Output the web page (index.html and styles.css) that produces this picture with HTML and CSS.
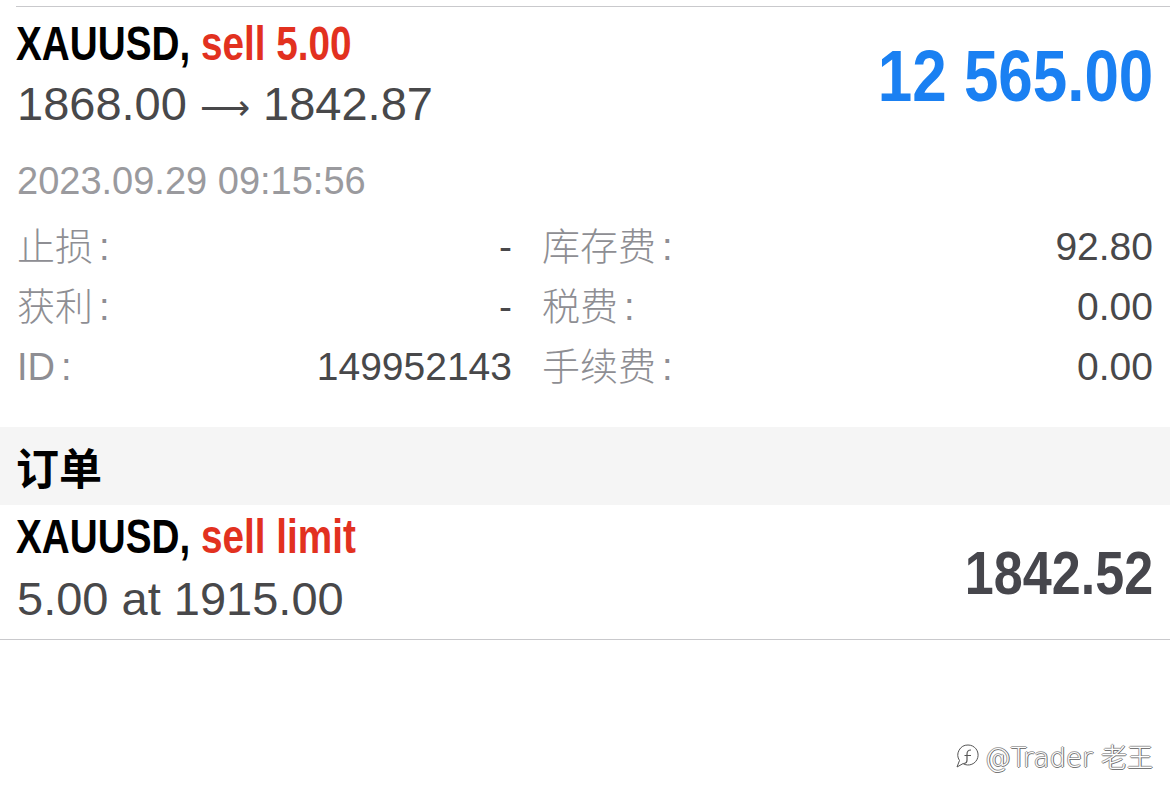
FILE: index.html
```html
<!DOCTYPE html>
<html lang="zh">
<head>
<meta charset="utf-8">
<title>XAUUSD</title>
<link rel="stylesheet" href="styles.css">
</head>
<body>
<div class="page">
  <section class="position">
    <div class="pos-head">
      <div class="pos-main">
        <div class="title"><span class="cond"><span class="sym">XAUUSD,</span> <span class="side">sell 5.00</span></span></div>
        <div class="prices">1868.00 <span class="arrow">⟶</span> 1842.87</div>
      </div>
      <div class="profit"><span class="cond-r">12 565.00</span></div>
    </div>
    <div class="time">2023.09.29 09:15:56</div>
    <div class="details">
      <div class="cell"><span class="label">止损<span class="colon">:</span></span><span class="value">-</span></div>
      <div class="cell"><span class="label">库存费<span class="colon">:</span></span><span class="value">92.80</span></div>
      <div class="cell"><span class="label">获利<span class="colon">:</span></span><span class="value">-</span></div>
      <div class="cell"><span class="label">税费<span class="colon">:</span></span><span class="value">0.00</span></div>
      <div class="cell"><span class="label">ID<span class="colon">:</span></span><span class="value">149952143</span></div>
      <div class="cell"><span class="label">手续费<span class="colon">:</span></span><span class="value">0.00</span></div>
    </div>
  </section>
  <div class="section-head">订单</div>
  <section class="order">
    <div class="order-main">
      <div class="title"><span class="cond"><span class="sym">XAUUSD,</span> <span class="side">sell limit</span></span></div>
      <div class="prices">5.00 at 1915.00</div>
    </div>
    <div class="order-price"><span class="cond-r">1842.52</span></div>
  </section>
  <div class="watermark">
    <svg class="wm-logo" width="26" height="30" viewBox="0 0 26 30">
      <path d="M14 4 A10 10 0 1 1 9 22.6 L3 26 L5.5 19.5 A10 10 0 0 1 14 4 Z" fill="none" stroke="#fff" stroke-width="3"/>
      <path d="M14 4 A10 10 0 1 1 9 22.6 L3 26 L5.5 19.5 A10 10 0 0 1 14 4 Z" fill="none" stroke="#555" stroke-width="1"/>
      <path d="M17 9 C13 9 13 11.5 13 13.5 L13 19 C13 21.5 11.5 22.5 9.5 22.5 M10.5 14.5 L17 14.5" fill="none" stroke="#555" stroke-width="1.2"/>
    </svg>
    <span class="wm-text">@Trader 老王</span>
  </div>
</div>
</body>
</html>
```
FILE: styles.css
```css
html, body {
  margin: 0;
  padding: 0;
  background: #ffffff;
}

.page {
  position: relative;
  width: 1170px;
  height: 799px;
  overflow: hidden;
  font-family: "Liberation Sans", "Noto Sans CJK SC", sans-serif;
}

.position {
  margin-top: 6px;
  margin-left: 16px;
  border-top: 1px solid #c9c9cc;
  padding: 6px 17px 0 0;
}

.pos-head {
  display: flex;
  align-items: center;
  justify-content: space-between;
}

.title {
  font-weight: bold;
  font-size: 49px;
  line-height: 60px;
  color: #000;
  white-space: nowrap;
}

.cond {
  display: inline-block;
  transform: scaleX(0.79);
  transform-origin: left center;
}

.cond-r {
  display: inline-block;
  transform: scaleX(0.84);
  transform-origin: right center;
}

.profit .cond-r {
  transform: scaleX(0.86);
}

.side {
  color: #e2311f;
}

.prices {
  font-size: 47px;
  line-height: 62px;
  color: #48484a;
  padding-left: 1px;
  white-space: nowrap;
}

.arrow {
  font-family: "DejaVu Sans", sans-serif;
  font-weight: 200;
  font-size: 35px;
}

.profit {
  font-weight: bold;
  font-size: 72px;
  color: #1a80f2;
  white-space: nowrap;
}

.time {
  margin-top: 17px;
  font-size: 38px;
  line-height: 50px;
  color: #9a9a9e;
  padding-left: 1px;
}

.details {
  margin-top: 11px;
  display: grid;
  grid-template-columns: 496px 1fr;
  column-gap: 29px;
  font-size: 38px;
  line-height: 60px;
}

.cell {
  display: flex;
  justify-content: space-between;
  align-items: baseline;
  white-space: nowrap;
  height: 60px;
}

.label {
  color: #8e8e93;
  font-weight: 300;
  padding-left: 1px;
}

.colon {
  margin-left: 6px;
}

.value {
  color: #48484a;
  font-size: 39px;
}

.section-head {
  margin-top: 30px;
  height: 78px;
  line-height: 78px;
  background: #f5f5f5;
  padding-left: 16px;
  font-family: "Noto Sans CJK SC", sans-serif;
  font-weight: 700;
  font-size: 43px;
  color: #000;
}

.order {
  display: flex;
  justify-content: space-between;
  align-items: center;
  padding: 0 17px 9px 16px;
  border-bottom: 1px solid #c9c9cc;
}

.order .title {
  line-height: 62px;
}

.order .prices {
  margin-top: 1px;
}

.order-price {
  margin-top: 10px;
  font-weight: bold;
  font-size: 62px;
  color: #46464c;
}

.watermark {
  position: absolute;
  right: 17px;
  top: 737px;
  display: flex;
  align-items: center;
  gap: 5px;
}

.wm-text {
  font-family: "DejaVu Sans", "Noto Sans CJK SC", sans-serif;
  font-weight: 200;
  font-size: 26px;
  color: #ffffff;
  text-shadow: 1px 0 0 #666, -1px 0 0 #999, 0 1px 0 #777, 0 -1px 0 #aaa;
}
```
